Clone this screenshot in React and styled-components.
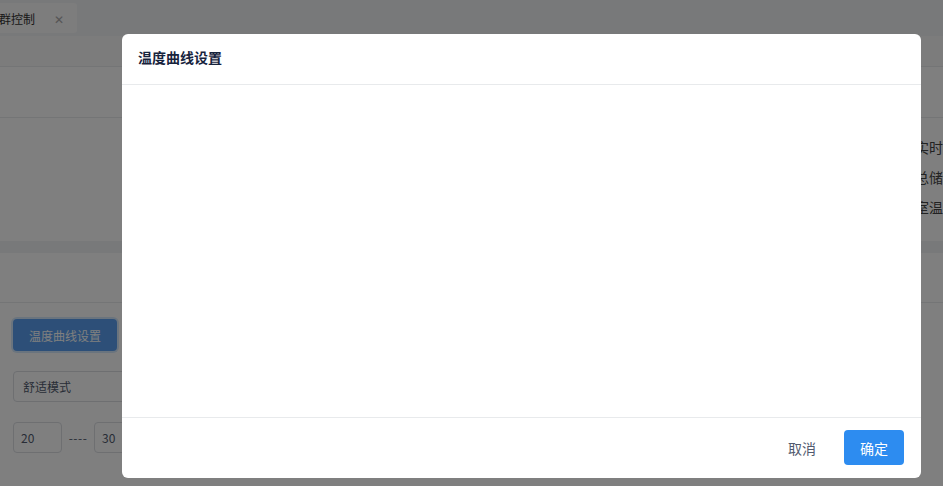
import React from "react";
import styled, { createGlobalStyle } from "styled-components";

const Global = createGlobalStyle`
  html, body { margin: 0; padding: 0; }
  body {
    font-family: "Noto Sans CJK SC", "Noto Sans", sans-serif;
    overflow: hidden;
    background: #f0f2f5;
  }
`;

const Page = styled.div`
  position: relative;
  width: 943px;
  height: 486px;
  overflow: hidden;
  background: #f0f2f5;
  display: flex;
  flex-direction: column;
`;

const TabBar = styled.div`
  height: 36px;
  box-sizing: border-box;
  padding-top: 3px;
  display: flex;
  align-items: flex-start;
  background: #f0f2f5;
`;

const Tab = styled.div`
  height: 30px;
  width: 77px;
  box-sizing: border-box;
  display: flex;
  align-items: center;
  gap: 19px;
  background: #fafafa;
  border-radius: 0 3px 3px 0;
  font-size: 12px;
  color: #333;
  span:first-child { margin-left: -1px; }
`;

const Close = styled.span`
  font-size: 12px;
  color: #aaa;
`;

const SubBar = styled.div`
  height: 31px;
  box-sizing: border-box;
  background: #f8f8f9;
  border-bottom: 1px solid #e8eaec;
`;

const Band = styled.div`
  height: ${(p) => p.$h}px;
  box-sizing: border-box;
  background: #fff;
  border-bottom: ${(p) => (p.$line ? "1px solid #e8eaec" : "none")};
`;

const InfoArea = styled.div`
  height: 123px;
  background: #fff;
  display: flex;
  flex-direction: column;
  align-items: flex-end;
  padding-top: 14px;
  box-sizing: border-box;
`;

const InfoLine = styled.div`
  height: 30px;
  line-height: 30px;
  font-size: 14px;
  color: #444;
  white-space: nowrap;
`;

const Gap = styled.div`
  height: 12px;
  background: #f0f2f5;
`;

const Card = styled.div`
  flex: 1;
  background: #fff;
  display: flex;
  flex-direction: column;
`;

const CardHead = styled.div`
  height: 50px;
  box-sizing: border-box;
  border-bottom: 1px solid #e8eaec;
`;

const CardBody = styled.div`
  padding: 16px 13px;
  display: flex;
  flex-direction: column;
  gap: 20px;
  align-items: flex-start;
`;

const BlueBtn = styled.div`
  width: 104px;
  height: 32px;
  box-sizing: border-box;
  border-radius: 4px;
  background: #5a9ff0;
  box-shadow: 0 0 0 2px rgba(45, 140, 240, 0.2);
  color: #fff;
  font-size: 12px;
  display: flex;
  align-items: center;
  justify-content: center;
`;

const SelectBox = styled.div`
  width: 200px;
  height: 31px;
  box-sizing: border-box;
  border: 1px solid #dcdee2;
  border-radius: 4px;
  padding-left: 9px;
  font-size: 12px;
  color: #515a6e;
  display: flex;
  align-items: center;
`;

const RangeRow = styled.div`
  display: flex;
  align-items: center;
  gap: 6px;
`;

const NumBox = styled.div`
  width: 49px;
  height: 31px;
  box-sizing: border-box;
  border: 1px solid #dcdee2;
  border-radius: 4px;
  padding-left: 7px;
  font-size: 12px;
  color: #515a6e;
  display: flex;
  align-items: center;
`;

const Dash = styled.span`
  font-size: 12px;
  color: #515a6e;
  width: 20px;
  text-align: center;
  letter-spacing: 0.5px;
`;

const Mask = styled.div`
  position: absolute;
  inset: 0;
  background: rgba(0, 0, 0, 0.5);
`;

const Modal = styled.div`
  position: absolute;
  left: 122px;
  top: 34px;
  width: 799px;
  height: 444px;
  background: #fff;
  border-radius: 6px;
  display: flex;
  flex-direction: column;
  overflow: hidden;
`;

const ModalHead = styled.div`
  height: 51px;
  box-sizing: border-box;
  padding: 13px 16px 0;
  border-bottom: 1px solid #e8eaec;
  line-height: 20px;
  font-size: 14px;
  font-weight: 700;
  color: #17233d;
`;

const ModalBody = styled.div`
  flex: 1;
`;

const ModalFoot = styled.div`
  height: 61px;
  box-sizing: border-box;
  border-top: 1px solid #e8eaec;
  padding: 12px 17px 0 0;
  display: flex;
  justify-content: flex-end;
  align-items: flex-start;
  gap: 12px;
`;

const Button = styled.button`
  width: 60px;
  height: 35px;
  border: none;
  border-radius: 4px;
  font-family: inherit;
  font-size: 14px;
  padding: 0;
  cursor: pointer;
  background: ${(p) => (p.$primary ? "#2d8cf0" : "transparent")};
  color: ${(p) => (p.$primary ? "#fff" : "#515a6e")};
`;

export default function App() {
  return (
    <>
      <Global />
      <Page>
        <TabBar>
          <Tab>
            <span>群控制</span>
            <Close>✕</Close>
          </Tab>
        </TabBar>
        <SubBar />
        <Band $h={51} $line />
        <InfoArea>
          <InfoLine>实时</InfoLine>
          <InfoLine>总储</InfoLine>
          <InfoLine>室温</InfoLine>
        </InfoArea>
        <Gap />
        <Card>
          <CardHead />
          <CardBody>
            <BlueBtn>温度曲线设置</BlueBtn>
            <SelectBox>舒适模式</SelectBox>
            <RangeRow>
              <NumBox>20</NumBox>
              <Dash>----</Dash>
              <NumBox>30</NumBox>
            </RangeRow>
          </CardBody>
        </Card>
        <Mask />
        <Modal>
          <ModalHead>温度曲线设置</ModalHead>
          <ModalBody />
          <ModalFoot>
            <Button>取消</Button>
            <Button $primary>确定</Button>
          </ModalFoot>
        </Modal>
      </Page>
    </>
  );
}
